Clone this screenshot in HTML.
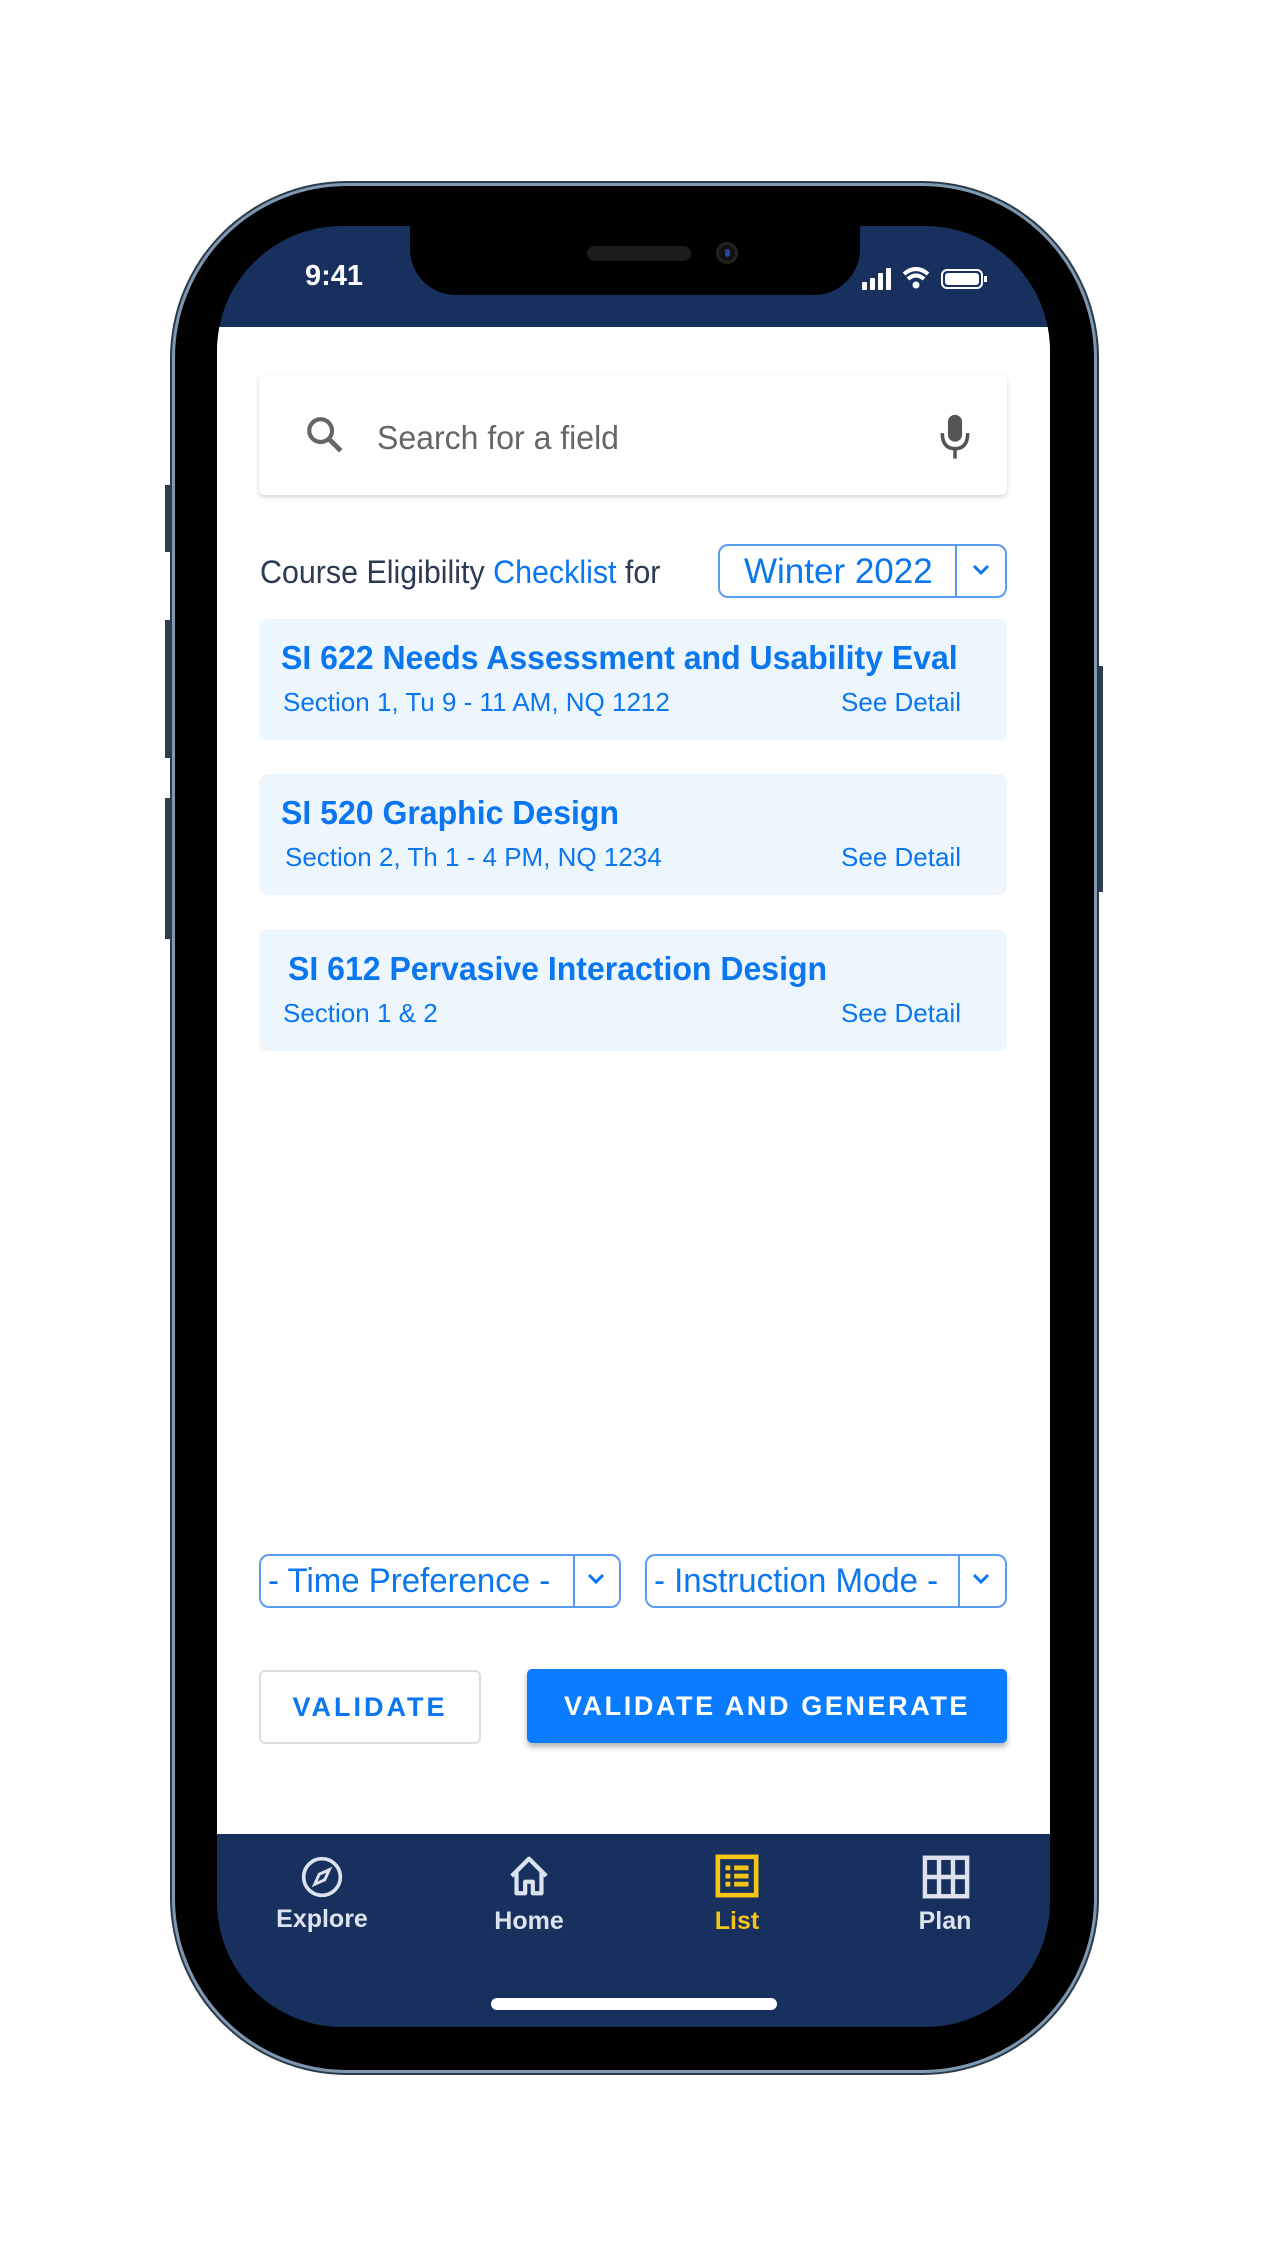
<!DOCTYPE html>
<html><head><meta charset="utf-8"><style>
*{margin:0;padding:0;box-sizing:border-box}
body{width:1266px;height:2250px;background:#fff;position:relative;overflow:hidden;font-family:"Liberation Sans Narrow","Liberation Sans",sans-serif}
.abs{position:absolute}
.phone{left:172px;top:183px;width:925px;height:1890px;border-radius:175px;background:#000;border:3px solid #7f98b0;box-shadow:0 0 0 2px #2a3a4a}
.screen{left:217px;top:226px;width:833px;height:1801px;border-radius:125px;background:#17305e;overflow:hidden}
.white{left:0;top:101px;width:833px;height:1507px;background:#fff}
.notch{left:193px;top:-1px;width:450px;height:70px;background:#000;border-radius:0 0 46px 46px}
.card{left:259px;width:748px;height:121px;background:#eef6fd;border-radius:8px}
.ct{position:absolute;left:22px;top:20px;font-size:33px;font-weight:bold;color:#0a76f0;transform:scaleX(.97);transform-origin:left;white-space:nowrap}
.cs{position:absolute;left:24px;top:68px;font-size:26px;color:#0a76f0;white-space:nowrap}
.cd{position:absolute;right:46px;top:68px;font-size:26px;color:#0a76f0}
.sel{height:54px;border:2px solid #5a9cf2;border-radius:10px;color:#0a76f0;white-space:nowrap}
.side{background:#2c3e50;width:8px}
.tab{position:absolute;width:160px;text-align:center;color:#dde3ee;font-family:"Liberation Sans",sans-serif;font-weight:bold;font-size:25px}
</style></head><body>
<div class="abs side" style="left:165px;top:485px;height:67px"></div>
<div class="abs side" style="left:165px;top:620px;height:138px"></div>
<div class="abs side" style="left:165px;top:798px;height:141px"></div>
<div class="abs side" style="left:1095px;top:666px;height:226px"></div>
<div class="abs phone"></div>
<div class="abs screen">
  <div class="abs white"></div>
  <div class="abs notch"></div>
  <div class="abs" style="left:370px;top:20px;width:104px;height:15px;border-radius:8px;background:#1c1c1c"></div>
  <div class="abs" style="left:499px;top:16px;width:22px;height:22px;border-radius:50%;background:#111;border:3px solid #222"><div style="margin:4px auto;width:5px;height:8px;background:#1e4aa0;border-radius:3px"></div></div>
  <div class="abs" style="left:88px;top:34px;color:#fff;font-family:'Liberation Sans',sans-serif;font-weight:bold;font-size:29px">9:41</div>
  <svg class="abs" style="left:645px;top:38px" width="160" height="30" viewBox="0 0 160 30">
    <rect x="0" y="18" width="5" height="8" rx="1" fill="#fff"/><rect x="8" y="14" width="5" height="12" rx="1" fill="#fff"/><rect x="16" y="9" width="5" height="17" rx="1" fill="#fff"/><rect x="24" y="4" width="5" height="22" rx="1" fill="#fff"/>
    <path d="M42 10 Q54 0 66 10" stroke="#fff" stroke-width="4" fill="none"/><path d="M46 15 Q54 8 62 15" stroke="#fff" stroke-width="4" fill="none"/><circle cx="54" cy="21" r="3.5" fill="#fff"/>
    <rect x="80" y="6" width="40" height="18" rx="5" fill="none" stroke="#fff" stroke-width="2"/><rect x="83" y="9" width="34" height="12" rx="3" fill="#fff"/><rect x="122" y="12" width="3" height="6" fill="#fff"/>
  </svg>
</div>
<div class="abs" style="left:259px;top:375px;width:748px;height:120px;background:#fff;border-radius:6px;box-shadow:0 2px 5px rgba(0,0,0,.18)"></div>
<svg class="abs" style="left:304px;top:414px" width="42" height="42" viewBox="0 0 24 24"><circle cx="9.5" cy="9.5" r="6.5" stroke="#666" stroke-width="2.4" fill="none"/><path d="M14.5 14.5 L21 21" stroke="#666" stroke-width="2.8"/></svg>
<div class="abs" style="left:377px;top:419px;font-size:33px;color:#666;transform:scaleX(.97);transform-origin:left">Search for a field</div>
<svg class="abs" style="left:938px;top:412px" width="34" height="48" viewBox="0 0 24 34"><rect x="7" y="2" width="10" height="19" rx="5" fill="#555"/><path d="M3 15 Q3 26 12 26 Q21 26 21 15" stroke="#555" stroke-width="2.5" fill="none"/><path d="M12 26 V33" stroke="#555" stroke-width="2.5"/></svg>
<div class="abs" style="left:260px;top:554px;font-size:32px;color:#2b3a55;transform:scaleX(.95);transform-origin:left;white-space:nowrap">Course Eligibility <span style="color:#0a76f0">Checklist</span> for</div>
<div class="abs sel" style="left:718px;top:544px;width:289px"><div style="position:absolute;left:24px;top:6px;font-size:35px">Winter 2022</div><div style="position:absolute;left:235px;top:0;width:2px;height:50px;background:#5a9cf2"></div><svg style="position:absolute;left:251px;top:16px" width="20" height="16"><path d="M3 4 L10 11 L17 4" stroke="#0a76f0" stroke-width="3" fill="none"/></svg></div>
<div class="abs card" style="top:619px"><div class="ct">SI 622 Needs Assessment and Usability Eval</div><div class="cs">Section 1, Tu 9 - 11 AM, NQ 1212</div><div class="cd">See Detail</div></div>
<div class="abs card" style="top:774px"><div class="ct">SI 520 Graphic Design</div><div class="cs" style="left:26px">Section 2, Th 1 - 4 PM, NQ 1234</div><div class="cd">See Detail</div></div>
<div class="abs card" style="top:930px"><div class="ct" style="left:29px">SI 612 Pervasive Interaction Design</div><div class="cs">Section 1 &amp; 2</div><div class="cd">See Detail</div></div>
<div class="abs sel" style="left:259px;top:1554px;width:362px"><div style="position:absolute;left:7px;top:6px;font-size:34px;transform:scaleX(.97);transform-origin:left">- Time Preference -</div><div style="position:absolute;left:312px;top:0;width:2px;height:50px;background:#5a9cf2"></div><svg style="position:absolute;left:325px;top:15px" width="20" height="16"><path d="M3 4 L10 11 L17 4" stroke="#0a76f0" stroke-width="3" fill="none"/></svg></div>
<div class="abs sel" style="left:645px;top:1554px;width:362px"><div style="position:absolute;left:7px;top:6px;font-size:34px;transform:scaleX(.97);transform-origin:left">- Instruction Mode -</div><div style="position:absolute;left:311px;top:0;width:2px;height:50px;background:#5a9cf2"></div><svg style="position:absolute;left:324px;top:15px" width="20" height="16"><path d="M3 4 L10 11 L17 4" stroke="#0a76f0" stroke-width="3" fill="none"/></svg></div>
<div class="abs" style="left:259px;top:1670px;width:222px;height:74px;border:2px solid #ddd;border-radius:6px;background:#fff;text-align:center;line-height:70px;color:#0a76f0;font-family:'Liberation Sans',sans-serif;font-weight:bold;font-size:27px;letter-spacing:3px">VALIDATE</div>
<div class="abs" style="left:527px;top:1669px;width:480px;height:74px;border-radius:5px;background:#0a7cff;box-shadow:0 4px 6px rgba(0,0,0,.3);text-align:center;line-height:74px;color:#fff;font-family:'Liberation Sans',sans-serif;font-weight:bold;font-size:27px;letter-spacing:2.6px">VALIDATE AND GENERATE</div>
<svg class="abs" style="left:300px;top:1855px" width="44" height="44" viewBox="0 0 24 24"><circle cx="12" cy="12" r="10" stroke="#dde3ee" stroke-width="2" fill="none"/><path d="M16 8 L13.5 13.5 L8 16 L10.5 10.5 Z" stroke="#dde3ee" stroke-width="1.6" fill="none"/></svg>
<svg class="abs" style="left:506px;top:1853px" width="46" height="46" viewBox="0 0 24 24"><path d="M3 12 L12 3 L21 12 M5.5 10 V21 H10 V15 H14 V21 H18.5 V10" stroke="#dde3ee" stroke-width="2.2" fill="none" stroke-linejoin="round"/></svg>
<svg class="abs" style="left:714px;top:1853px" width="46" height="46" viewBox="0 0 24 24"><rect x="2" y="2" width="20" height="20" stroke="#f5c518" stroke-width="2.4" fill="none"/><rect x="6" y="6.5" width="2.5" height="2.5" fill="#f5c518"/><rect x="6" y="10.8" width="2.5" height="2.5" fill="#f5c518"/><rect x="6" y="15" width="2.5" height="2.5" fill="#f5c518"/><rect x="10.5" y="6.5" width="7.5" height="2.5" fill="#f5c518"/><rect x="10.5" y="10.8" width="7.5" height="2.5" fill="#f5c518"/><rect x="10.5" y="15" width="7.5" height="2.5" fill="#f5c518"/></svg>
<svg class="abs" style="left:921px;top:1855px" width="50" height="44" viewBox="0 0 26 24"><rect x="1.5" y="1.5" width="23" height="21" stroke="#dde3ee" stroke-width="2.4" fill="none"/><path d="M9.2 1.5 V22.5 M16.8 1.5 V22.5 M1.5 12 H24.5" stroke="#dde3ee" stroke-width="2.4"/></svg>
<div class="tab" style="left:242px;top:1905px">Explore</div>
<div class="tab" style="left:449px;top:1907px">Home</div>
<div class="tab" style="left:657px;top:1907px;color:#f5c518">List</div>
<div class="tab" style="left:865px;top:1907px">Plan</div>
<div class="abs" style="left:491px;top:1998px;width:286px;height:12px;border-radius:6px;background:#fff"></div>
</body></html>
